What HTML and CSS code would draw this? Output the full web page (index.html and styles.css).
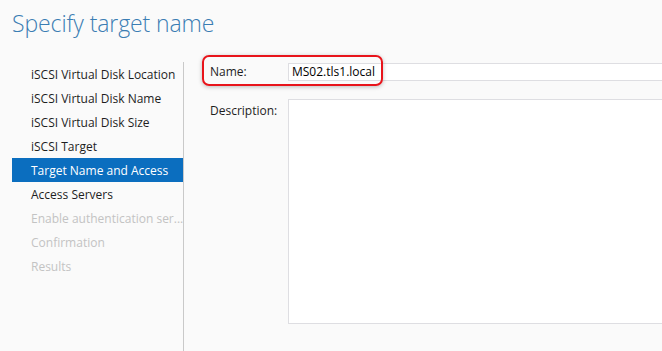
FILE: index.html
```html
<!DOCTYPE html>
<html>
<head>
<meta charset="utf-8">
<link rel="stylesheet" href="styles.css">
</head>
<body>
<h1 class="title">Specify target name</h1>
<div class="main">
  <ul class="steps">
    <li class="step">iSCSI Virtual Disk Location</li>
    <li class="step">iSCSI Virtual Disk Name</li>
    <li class="step">iSCSI Virtual Disk Size</li>
    <li class="step">iSCSI Target</li>
    <li class="step active">Target Name and Access</li>
    <li class="step">Access Servers</li>
    <li class="step disabled">Enable authentication ser...</li>
    <li class="step disabled">Confirmation</li>
    <li class="step disabled">Results</li>
  </ul>
  <div class="content">
    <div class="row name-row">
      <label class="label">Name:</label>
      <div class="input">MS02.tls1.local</div>
      <div class="highlight"></div>
    </div>
    <div class="row desc-row">
      <label class="label desc-label">Description:</label>
      <div class="textarea"></div>
    </div>
  </div>
</div>
</body>
</html>
```
FILE: styles.css
```css
* { box-sizing: border-box; }
html, body { margin: 0; padding: 0; }
body {
  width: 662px;
  height: 351px;
  overflow: hidden;
  background: #fafafa;
  font-family: "Open Sans", "Noto Sans", sans-serif;
  font-size: 12px;
  color: #1e1e1e;
}
.title {
  margin: 0;
  padding: 8px 0 0 12px;
  height: 62px;
  font-weight: 300;
  font-size: 23px;
  line-height: 30px;
  color: #3a7db3;
  letter-spacing: -0.1px;
}
.main {
  display: flex;
  height: 289px;
}
.steps {
  list-style: none;
  margin: 0 0 0 12px;
  padding: 0;
  width: 172px;
  border-right: 1px solid #c9c9c9;
}
.step {
  height: 24px;
  line-height: 24px;
  padding: 1px 0 0 19px;
  width: 171px;
  white-space: nowrap;
  color: #1e1e1e;
}
.step.active {
  background: #0b6ebf;
  color: #ffffff;
}
.step.disabled {
  color: #c3c3c3;
}
.content {
  flex: 1;
  padding: 1px 0 0 26px;
}
.row {
  display: flex;
  position: relative;
}
.label {
  width: 78px;
  flex: none;
  line-height: 18px;
}
.input {
  flex: 1;
  height: 18px;
  line-height: 16px;
  padding-left: 3px;
  background: #ffffff;
  border: 1px solid #dedee2;
  border-right: none;
  color: #000;
}
.highlight {
  position: absolute;
  left: -8px;
  top: -8px;
  width: 181px;
  height: 31px;
  border: 2px solid #e8141b;
  border-radius: 7px;
  box-shadow: 0 1px 4px rgba(0,0,0,0.25);
}
.desc-row {
  margin-top: 18px;
}
.desc-label {
  padding-top: 3px;
}
.textarea {
  flex: 1;
  height: 225px;
  background: #ffffff;
  border: 1px solid #dedee2;
  border-right: none;
}
```
